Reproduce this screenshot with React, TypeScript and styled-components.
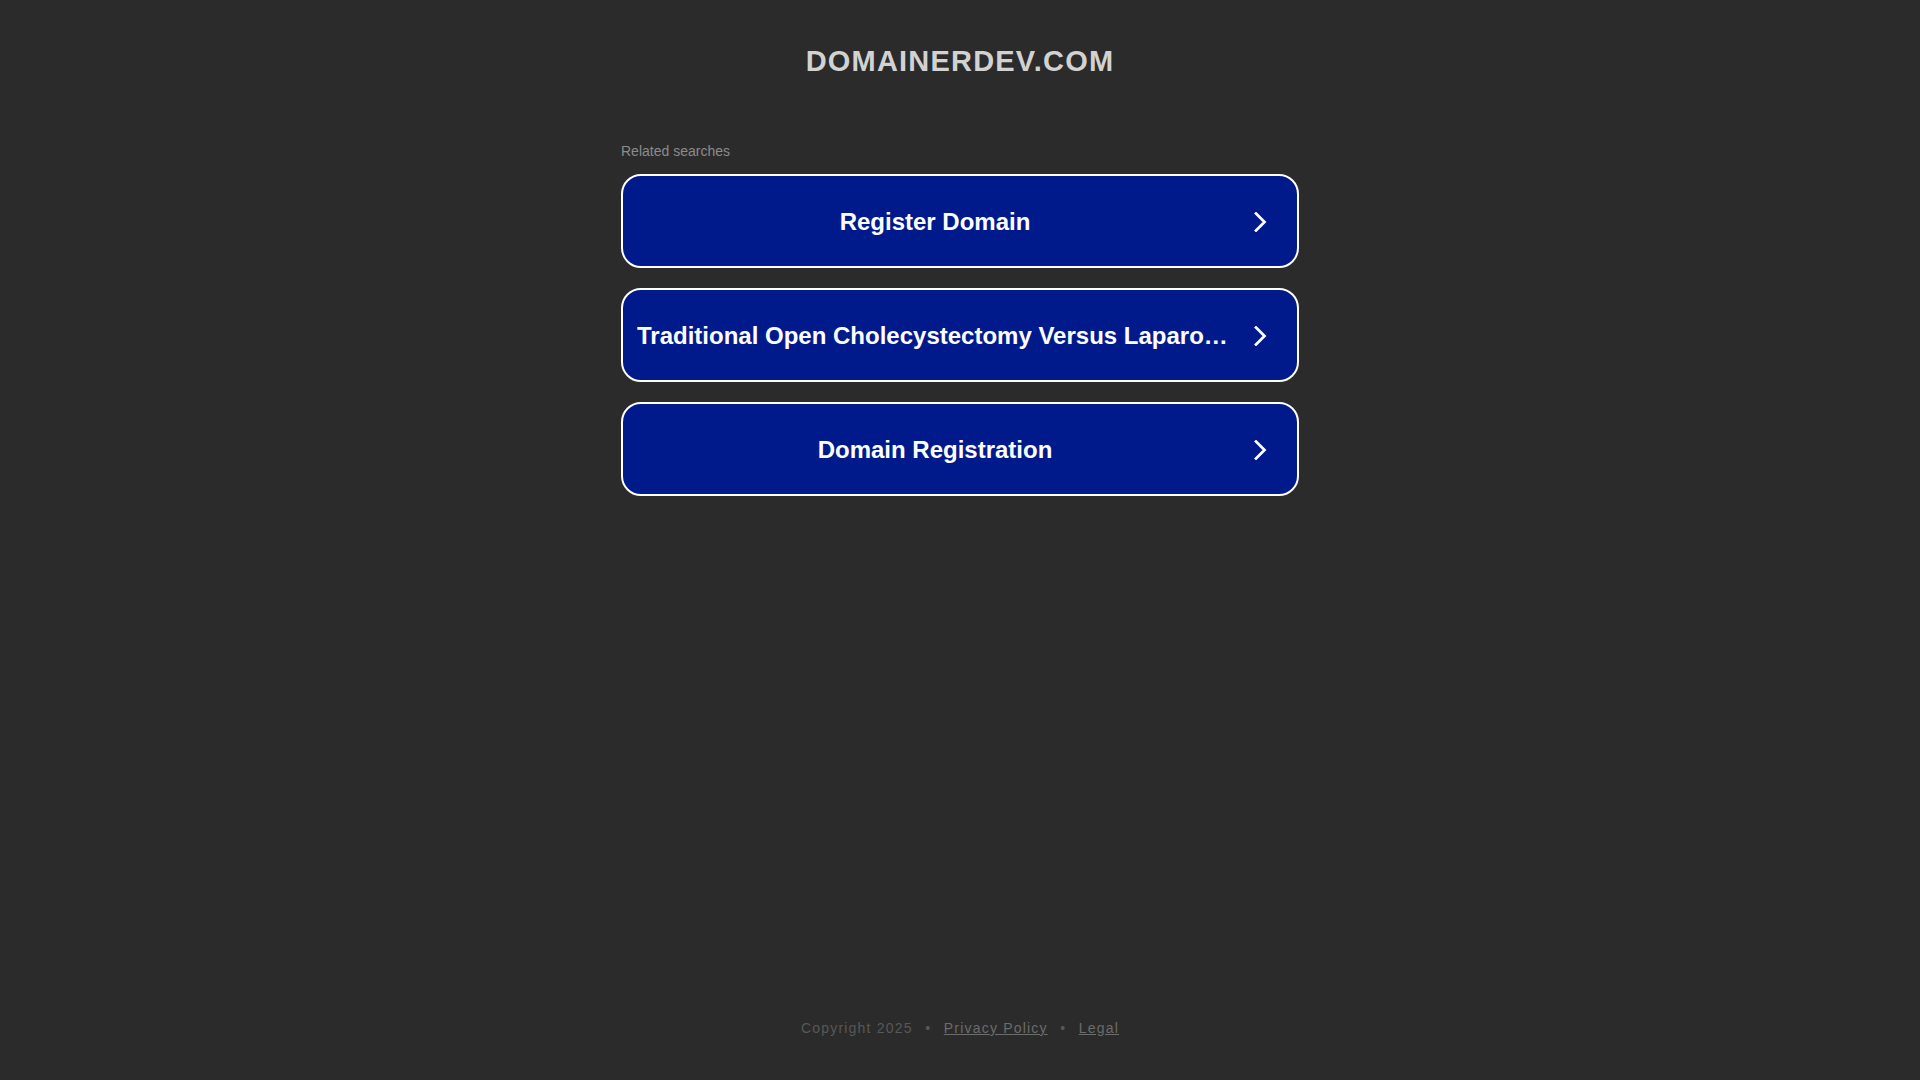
import React from "react";
import styled, { createGlobalStyle } from "styled-components";

const Global = createGlobalStyle`
  html, body { margin: 0; padding: 0; background: #2b2b2b; }
  body { font-family: Arial, "Liberation Sans", Helvetica, sans-serif; }
  * { box-sizing: border-box; }
`;

const Page = styled.div`
  min-height: 100vh;
  display: flex;
  flex-direction: column;
  align-items: center;
`;

const Header = styled.header`
  padding-top: 43px;
  height: 143px;
`;

const DomainTitle = styled.h1`
  margin: 0;
  font-size: 29px;
  line-height: 36px;
  font-weight: 700;
  letter-spacing: 1.2px;
  color: #d2d2d2;
  text-transform: uppercase;
  text-align: center;
`;

const Main = styled.main`
  width: 678px;
`;

const SectionLabel = styled.div`
  font-size: 14px;
  line-height: 16px;
  color: #8c8c8c;
  margin-bottom: 15px;
`;

const List = styled.div`
  display: flex;
  flex-direction: column;
  gap: 20px;
`;

const SearchButton = styled.a`
  display: flex;
  align-items: center;
  height: 94px;
  padding: 2px 14px 0;
  background: #011a8b;
  border: 2px solid #ffffff;
  border-radius: 20px;
  color: #ffffff;
  text-decoration: none;
  cursor: pointer;
`;

const Label = styled.span`
  flex: 1;
  min-width: 0;
  font-size: 24px;
  line-height: 30px;
  font-weight: 700;
  text-align: center;
  white-space: nowrap;
  overflow: hidden;
  text-overflow: ellipsis;
`;

const ChevronBox = styled.span`
  width: 50px;
  flex: none;
  display: flex;
  justify-content: center;
  align-items: center;
  padding-left: 5px;
`;

const Footer = styled.footer`
  margin-top: auto;
  padding-bottom: 43px;
  display: flex;
  align-items: center;
  font-size: 14px;
  line-height: 18px;
  letter-spacing: 1.2px;
  color: #585858;
`;

const FooterLink = styled.a`
  color: #6c6c6c;
  text-decoration: underline;
`;

const Dot = styled.span`
  margin: 0 12.5px;
`;

const Chevron = () => (
  <svg width="14" height="20" viewBox="0 0 14 20" fill="none">
    <polyline
      points="2,1.5 10.5,10 2,18.5"
      stroke="#ffffff"
      strokeWidth="2.7"
      strokeLinecap="square"
      strokeLinejoin="miter"
    />
  </svg>
);

const items = [
  "Register Domain",
  "Traditional Open Cholecystectomy Versus Laparoscopic Cholecystectomy",
  "Domain Registration",
];

export default function App() {
  return (
    <>
      <Global />
      <Page>
        <Header>
          <DomainTitle>domainerdev.com</DomainTitle>
        </Header>
        <Main>
          <SectionLabel>Related searches</SectionLabel>
          <List>
            {items.map((t) => (
              <SearchButton key={t} title={t}>
                <Label>{t}</Label>
                <ChevronBox>
                  <Chevron />
                </ChevronBox>
              </SearchButton>
            ))}
          </List>
        </Main>
        <Footer>
          <span>Copyright 2025</span>
          <Dot>•</Dot>
          <FooterLink>Privacy Policy</FooterLink>
          <Dot>•</Dot>
          <FooterLink>Legal</FooterLink>
        </Footer>
      </Page>
    </>
  );
}
